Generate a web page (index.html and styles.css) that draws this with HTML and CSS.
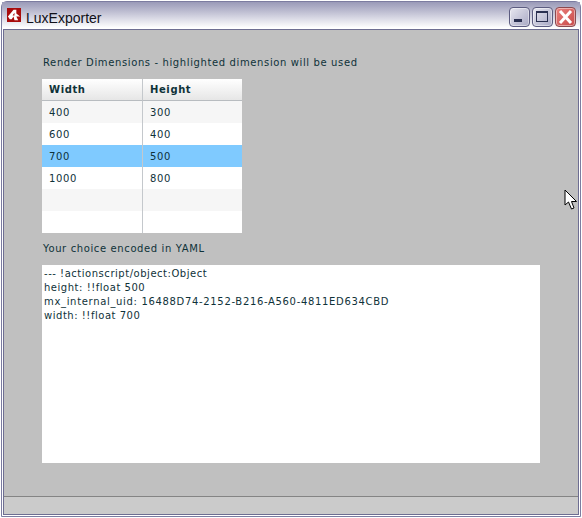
FILE: index.html
```html
<!DOCTYPE html>
<html lang="en">
<head>
  <meta charset="UTF-8">
  <title>LuxExporter</title>
  <link rel="stylesheet" href="styles.css">
</head>
<body>
  <div class="window">
    <div class="titlebar">
      <svg class="app-icon" width="14" height="14" viewBox="0 0 15 15">
        <rect x="0" y="0" width="15" height="15" fill="#a80c0c"/>
        <path d="M1 9 L7 2 L10 2 L10 6 L14 9 L10 9 L12 13 L8 13 L7 9 L5 12 L3 12 Z M6 8 L8 8 L8 5 Z" fill="#fff" fill-rule="evenodd"/>
      </svg>
      <span class="title">LuxExporter</span>
      <div class="buttons">
        <div class="btn">
          <svg width="19" height="18" viewBox="0 0 19 18"><rect x="4" y="11" width="8" height="3" fill="#2a3050"/></svg>
        </div>
        <div class="btn">
          <svg width="19" height="18" viewBox="0 0 19 18"><rect x="3.5" y="3.5" width="11" height="10" fill="none" stroke="#2a3050"/><rect x="3" y="3" width="12" height="2" fill="#2a3050"/></svg>
        </div>
        <div class="btn close">
          <svg width="19" height="18" viewBox="0 0 19 18"><path d="M4 3 L15 15 M15 3 L4 15" stroke="#fff" stroke-width="3"/></svg>
        </div>
      </div>
    </div>

    <div class="content">
      <div class="main">
        <p class="label first">Render Dimensions - highlighted dimension will be used</p>
        <table class="grid">
          <thead>
            <tr><th>Width</th><th>Height</th></tr>
          </thead>
          <tbody>
            <tr class="alt"><td>400</td><td>300</td></tr>
            <tr><td>600</td><td>400</td></tr>
            <tr class="selected"><td>700</td><td>500</td></tr>
            <tr><td>1000</td><td>800</td></tr>
            <tr class="alt"><td></td><td></td></tr>
            <tr><td></td><td></td></tr>
          </tbody>
        </table>
        <p class="label second">Your choice encoded in YAML</p>
        <div class="yaml">--- !actionscript/object:Object
height: !!float 500
<span class="uid">mx_internal_uid: 16488D74-2152-B216-A560-4811ED634CBD</span>
width: !!float 700</div>
      </div>
      <div class="statusbar"></div>
    </div>
  </div>

  <!-- mouse pointer caught in the screenshot -->
  <svg class="cursor" width="14" height="22" viewBox="0 0 14 22">
    <path d="M1 1 L1 16 L4.5 13 L7.5 20 L10 19 L7.5 12.5 L12.5 12.5 Z" fill="#fff" stroke="#000"/>
  </svg>
</body>
</html>
```

FILE: styles.css
```css
html, body {
  margin: 0;
  padding: 0;
}

body {
  width: 582px;
  height: 518px;
  overflow: hidden;
  position: relative;
  background: #fff;
  font-family: "DejaVu Sans", Verdana, sans-serif;
}

.window {
  box-sizing: border-box;
  width: 580px;
  height: 516px;
  margin: 1px;
  display: flex;
  flex-direction: column;
  border: 1px solid #7c7ca0;
  border-radius: 6px 6px 0 0;
  background: #fff;
}

.titlebar {
  box-sizing: border-box;
  height: 26px;
  display: flex;
  align-items: flex-start;
  padding: 5px 4px 0 5px;
  background: linear-gradient(#9a9ab8 0%, #bcbcd0 35%, #e6e6ee 75%, #fff 100%);
}

.app-icon {
  margin: 1px 5px 0 0;
}

.title {
  font-family: "Liberation Sans", Arial, sans-serif;
  font-size: 14px;
  line-height: 22px;
  color: #101018;
  flex: 1;
}

.buttons {
  display: flex;
  gap: 2px;
}

.btn {
  box-sizing: border-box;
  width: 21px;
  height: 20px;
  border: 1px solid #5c5c80;
  border-radius: 4px;
  background: linear-gradient(135deg, #e8e8f0, #a8a8c4);
  box-shadow: inset 0 0 0 1px rgba(255, 255, 255, 0.45);
}

.btn.close {
  border-color: #8a4a50;
  background: linear-gradient(135deg, #ea807c, #c84a4a);
}

.btn svg {
  display: block;
}

.content {
  flex: 1;
  margin: 1px;
  border: 1px solid #6e6e92;
  background: #c0c0c0;
  display: flex;
  flex-direction: column;
}

.main {
  flex: 1;
  padding: 0 38px;
}

.label {
  margin: 0;
  font-size: 10px;
  line-height: 14px;
  color: #0f3239;
  letter-spacing: 0.62px;
}

.label.first {
  padding: 26px 0 9px 1px;
}

.label.second {
  padding: 9px 0 9px 1px;
}

.grid {
  border-collapse: separate;
  border-spacing: 0;
  table-layout: fixed;
  width: 200px;
  background: #fff;
  font-size: 10px;
  color: #0f3239;
  letter-spacing: 0.6px;
}

.grid th {
  box-sizing: border-box;
  height: 22px;
  padding: 0 0 0 7px;
  text-align: left;
  font-size: 10px;
  font-weight: bold;
  background: linear-gradient(#fff, #e6e6e6);
  border-bottom: 1px solid #b8bcc0;
}

.grid td {
  box-sizing: border-box;
  height: 22px;
  padding: 0 0 0 7px;
}

.grid th:first-child,
.grid td:first-child {
  width: 101px;
  border-right: 1px solid #c4c8cc;
}

.grid .alt td {
  background: #f6f6f6;
}

.grid .selected td {
  background: #7fcaff;
}

.yaml {
  box-sizing: border-box;
  width: 498px;
  height: 198px;
  padding: 2px;
  background: #fff;
  font-size: 10px;
  line-height: 14px;
  color: #0f3239;
  white-space: pre;
  letter-spacing: 0.53px;
}

.yaml .uid {
  letter-spacing: 0.67px;
}

.statusbar {
  height: 17px;
  border-top: 1px solid #848484;
  background: #cbcbcb;
}

.cursor {
  position: absolute;
  left: 564px;
  top: 189px;
}
```
